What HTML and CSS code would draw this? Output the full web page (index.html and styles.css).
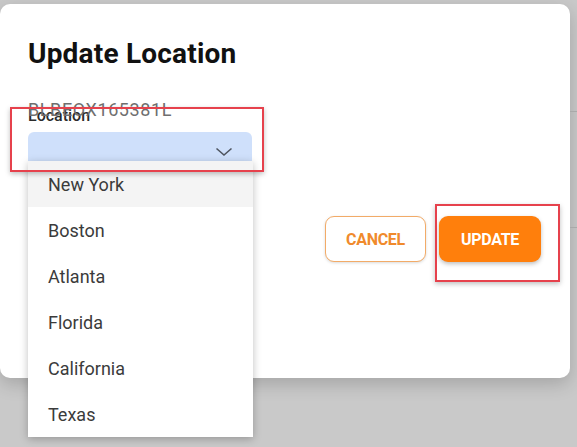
FILE: index.html
```html
<!DOCTYPE html>
<html lang="en">
<head>
    <meta charset="UTF-8">
    <meta name="viewport" content="width=device-width, initial-scale=1.0">
    <title>Update Location</title>
    <link rel="stylesheet" href="styles.css">
</head>
<body>
    <div class="backdrop">
        <div class="modal">
            <h2 class="modal-title">Update Location</h2>
            <div class="field">
                <span class="ref-number">BLBEOX165381L</span>
                <label class="field-label">Location</label>
                <div class="select">
                    <svg class="chevron" width="18" height="10" viewBox="0 0 18 10">
                        <path d="M1.5 1.5 L9 8 L16.5 1.5" fill="none" stroke="#4f5560" stroke-width="1.6"/>
                    </svg>
                </div>
                <ul class="dropdown">
                    <li class="active">New York</li>
                    <li>Boston</li>
                    <li>Atlanta</li>
                    <li>Florida</li>
                    <li>California</li>
                    <li>Texas</li>
                </ul>
                <div class="mark mark-select"></div>
            </div>
            <div class="actions">
                <button class="btn btn-outline">CANCEL</button>
                <button class="btn btn-primary">UPDATE</button>
                <div class="mark mark-update"></div>
            </div>
        </div>
        <div class="side-lines">
            <span class="line line-1"></span>
            <span class="line line-2"></span>
        </div>
    </div>
</body>
</html>
```

FILE: styles.css
```css
body {
    margin: 0;
    padding: 0;
    background-color: #c9c9c9;
    font-family: Roboto, "Liberation Sans", sans-serif;
    overflow: hidden;
}
.backdrop {
    display: flex;
    padding-top: 4px;
    height: 443px;
}
.modal {
    width: 570px;
    height: 374px;
    background: white;
    border-radius: 10px;
    box-shadow: 0 6px 18px rgba(0, 0, 0, 0.18);
    padding: 0 29px 0 28px;
    box-sizing: border-box;
    flex-shrink: 0;
}
.modal-title {
    margin: 0;
    padding-top: 34px;
    font-size: 28px;
    line-height: 32px;
    font-weight: 700;
    color: #111;
    letter-spacing: 0.2px;
}
.field {
    position: relative;
    margin-top: 30px;
    width: 224px;
}
.ref-number {
    position: absolute;
    top: -1px;
    left: 0;
    font-size: 18px;
    color: #6f6f6f;
    letter-spacing: 0.6px;
    white-space: nowrap;
}
.field-label {
    display: block;
    padding-top: 7px;
    font-size: 16px;
    line-height: 18px;
    font-weight: 500;
    color: #2b2b2b;
}
.select {
    margin-top: 7px;
    height: 38px;
    background: #cfe0fb;
    border-radius: 6px 6px 0 0;
    display: flex;
    justify-content: flex-end;
    align-items: center;
    padding-right: 19px;
}
.chevron {
    margin-top: 2px;
}
.dropdown {
    position: absolute;
    top: 61px;
    left: 0;
    width: 225px;
    margin: 0;
    padding: 0;
    list-style: none;
    background: white;
    box-shadow: 0 2px 8px rgba(0, 0, 0, 0.25);
    z-index: 2;
}
.dropdown li {
    height: 46px;
    line-height: 47px;
    padding-left: 20px;
    font-size: 18px;
    color: #3b3b3b;
}
.dropdown li.active {
    background: #f4f4f4;
}
.mark {
    position: absolute;
    border: 2px solid #e6414c;
    box-shadow: 0 2px 5px rgba(0, 0, 0, 0.25);
    z-index: 3;
}
.mark-select {
    top: 7px;
    left: -18px;
    width: 250px;
    height: 61px;
}
.actions {
    position: relative;
    display: flex;
    justify-content: flex-end;
    gap: 13px;
    margin-top: 46px;
}
.btn {
    height: 46px;
    border-radius: 9px;
    font-family: Roboto, "Liberation Sans", sans-serif;
    font-size: 16px;
    font-weight: 700;
    letter-spacing: -0.3px;
    cursor: pointer;
}
.btn-outline {
    width: 101px;
    background: white;
    color: #f08a2c;
    border: 1px solid #f2ab68;
    box-shadow: 0 1px 3px rgba(0, 0, 0, 0.15);
}
.btn-primary {
    width: 102px;
    background: #ff7f0c;
    color: white;
    border: none;
    box-shadow: 0 2px 4px rgba(0, 0, 0, 0.25);
}
.mark-update {
    top: -12px;
    right: -19px;
    width: 121px;
    height: 74px;
}
.side-lines {
    flex: 1;
    position: relative;
}
.line {
    position: absolute;
    left: 0;
    right: 0;
    height: 1px;
    background: #a9a9a9;
}
.line-1 {
    top: 107px;
}
.line-2 {
    top: 223px;
}
```
